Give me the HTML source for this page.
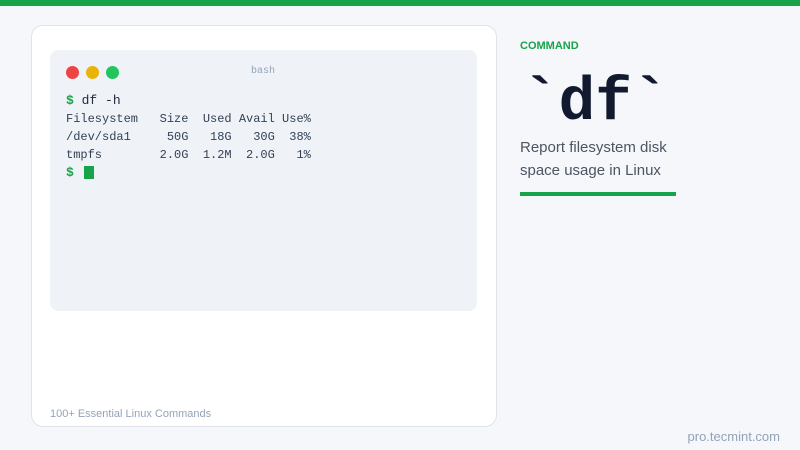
<!DOCTYPE html>
<html><head><meta charset="utf-8"><style>
*{margin:0;padding:0;box-sizing:border-box}
body{width:800px;height:450px;background:#f5f7fa;position:relative;overflow:hidden;font-family:"Liberation Sans",sans-serif}
.bar{position:absolute;left:0;top:0;width:800px;height:6px;background:#16a34a}
.card{position:absolute;left:31px;top:25px;width:466px;height:402px;background:#fff;border:1px solid #dfe3ea;border-radius:12px}
.term{position:absolute;left:50px;top:50px;width:427px;height:261px;background:#eff3f8;border-radius:8px}
.dot{position:absolute;top:66px;width:13px;height:13px;border-radius:50%}
.mono{font-family:"Liberation Mono",monospace}
.t{position:absolute;left:66px;font-size:12px;color:#334155;white-space:pre;line-height:18px}
</style></head><body>
<div class="bar"></div>
<div class="card"></div>
<div class="term"></div>
<div class="dot" style="left:66px;background:#ef4444"></div>
<div class="dot" style="left:86px;background:#eab308"></div>
<div class="dot" style="left:106px;background:#22c55e"></div>
<div class="mono" style="position:absolute;left:251px;top:66px;font-size:10px;color:#94a3b8">bash</div>
<div class="mono t" style="top:92px;font-size:13px;color:#1e293b"><b style="color:#16a34a">$</b> df -h</div>
<div class="mono t" style="top:110px">Filesystem   Size  Used Avail Use%
/dev/sda1     50G   18G   30G  38%
tmpfs        2.0G  1.2M  2.0G   1%</div>
<div class="mono t" style="top:164px;font-size:13px"><b style="color:#16a34a">$</b></div>
<div style="position:absolute;left:84px;top:166px;width:10px;height:13px;background:#16a34a"></div>
<div style="position:absolute;left:50px;top:408px;font-size:11px;color:#94a3b8">100+ Essential Linux Commands</div>
<div style="position:absolute;left:520px;top:40px;font-size:11px;font-weight:bold;color:#16a34a">COMMAND</div>
<div class="mono" style="position:absolute;left:522px;top:64px;font-size:61px;font-weight:bold;color:#111a2e;line-height:80px">`df`</div>
<div style="position:absolute;left:520px;top:136px;font-size:15px;color:#4b5563;line-height:23px;width:170px">Report filesystem disk space usage in Linux</div>
<div style="position:absolute;left:520px;top:192px;width:156px;height:4px;background:#16a34a"></div>
<div style="position:absolute;right:20px;top:429px;font-size:13px;color:#94a3b8">pro.tecmint.com</div>
</body></html>
